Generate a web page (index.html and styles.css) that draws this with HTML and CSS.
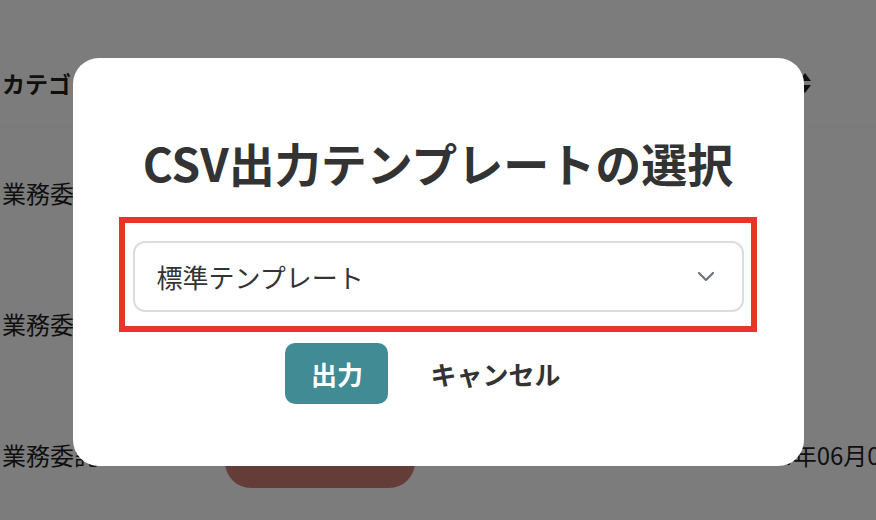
FILE: index.html
```html
<!DOCTYPE html>
<html lang="ja">
<head>
  <meta charset="UTF-8" />
  <meta name="viewport" content="width=device-width, initial-scale=1.0"/>
  <title>CSV出力</title>
  <link rel="stylesheet" href="styles.css">
</head>
<body>

  <div class="page">
    <div class="row head">
      <span class="cell-cat">カテゴリ</span>
      <span class="cell-sort">
        <svg width="14" height="22" viewBox="0 0 14 22"><path d="M7 1 L13 9 L1 9 Z M1 13 L13 13 L7 21 Z" fill="#222"/></svg>
      </span>
    </div>
    <div class="row"><span class="cell-cat">業務委託</span></div>
    <div class="row"><span class="cell-cat">業務委託</span></div>
    <div class="row">
      <span class="cell-cat">業務委託</span>
      <button class="danger">削除</button>
      <span class="cell-date">2024年06月01日</span>
    </div>
  </div>

  <div class="overlay">
    <div class="modal">
      <h2 class="modal-title">CSV出力テンプレートの選択</h2>
      <div class="select">
        <span>標準テンプレート</span>
        <svg width="18" height="11" viewBox="0 0 18 11"><polyline points="2,2 9,9 16,2" fill="none" stroke="#6b7280" stroke-width="2.2" stroke-linecap="round" stroke-linejoin="round"/></svg>
      </div>
      <div class="actions">
        <button class="btn-primary">出力</button>
        <button class="btn-text">キャンセル</button>
      </div>
      <div class="mark"></div>
    </div>
  </div>

</body>
</html>
```

FILE: styles.css
```css
body {
  margin: 0;
  font-family: "Noto Sans CJK JP", "Noto Sans", sans-serif;
  background: #fff;
  color: #333;
  overflow: hidden;
}

.page {
  width: 876px;
  height: 520px;
  padding-top: 40px;
  box-sizing: border-box;
  overflow: hidden;
}

.row {
  position: relative;
  display: flex;
  align-items: center;
  height: 130px;
  border-bottom: 1px solid #fafafa;
  font-size: 24px;
}

.row.head {
  height: 86px;
  border-bottom: 1px solid #f8f8f8;
}

.row.head .cell-cat {
  font-weight: bold;
  font-size: 23px;
}

.cell-cat {
  width: 223px;
  padding-left: 2px;
  white-space: nowrap;
  color: #1f1f1f;
}

.cell-sort {
  margin-left: auto;
  margin-right: 64px;
  display: flex;
}

.danger {
  align-self: flex-start;
  width: 190px;
  height: 60px;
  margin-top: 39px;
  padding-bottom: 14px;
  border: none;
  border-radius: 26px;
  background: #cf7d74;
  color: #fff;
  font-size: 18px;
}

.cell-date {
  margin-left: auto;
  margin-right: -42px;
  color: #1f1f1f;
  font-size: 24px;
  white-space: nowrap;
}

.overlay {
  position: fixed;
  inset: 0;
  background: rgba(0, 0, 0, 0.515);
  display: flex;
  justify-content: center;
  align-items: flex-start;
  padding-top: 58px;
}

.modal {
  position: relative;
  width: 731px;
  height: 408px;
  box-sizing: border-box;
  padding: 72px 60px 0;
  background: #fff;
  border-radius: 26px;
}

.modal-title {
  margin: 0 0 47px;
  text-align: center;
  font-size: 46px;
  line-height: 64px;
  font-weight: bold;
  color: #333;
  white-space: nowrap;
}

.select {
  display: flex;
  align-items: center;
  justify-content: space-between;
  height: 71px;
  box-sizing: border-box;
  padding: 0 27px 0 22px;
  border: 2px solid #dadce1;
  border-radius: 12px;
  font-size: 26px;
  color: #333;
}

.actions {
  display: flex;
  justify-content: center;
  gap: 18px;
  margin-top: 31px;
}

.actions button {
  font-family: inherit;
  font-size: 26px;
  font-weight: bold;
  height: 61px;
  border: none;
  cursor: pointer;
}

.btn-primary {
  width: 103px;
  border-radius: 10px;
  background: #408b94;
  color: #fff;
}

.btn-text {
  background: transparent;
  color: #333;
  padding: 0 30px 0 24px;
}

.mark {
  position: absolute;
  left: 46px;
  top: 159px;
  width: 638px;
  height: 115px;
  box-sizing: border-box;
  border: 6px solid #e8352a;
  pointer-events: none;
}
```
